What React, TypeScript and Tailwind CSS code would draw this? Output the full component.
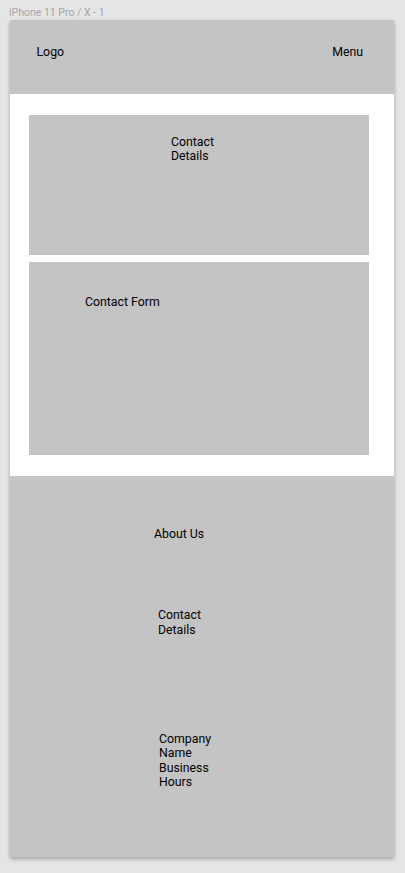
export default function App() {
  return (
    <div className="min-h-[873px] w-[405px] bg-[#e5e5e5] pt-[5px] font-['Roboto',sans-serif] text-black">
      <div className="ml-[9px] h-[15px] text-[10.5px] leading-[15px] text-[#a6a6a6]">iPhone 11 Pro / X - 1</div>
      <div className="ml-[9.5px] w-[384.5px] shadow-[0_2px_4px_rgba(0,0,0,0.3)]">
        <header className="flex h-[74px] items-start justify-between bg-[#c4c4c4] pl-[27px] pr-[31px] pt-[25px] text-[12.3px] leading-[14.5px]">
          <span>Logo</span>
          <span>Menu</span>
        </header>
        <main className="flex flex-col gap-[7px] bg-white pb-[21px] pl-[19.5px] pt-[21px]">
          <section className="h-[140px] w-[340px] bg-[#c4c4c4] pl-[142px] pt-[19.5px]">
            <p className="w-[60px] text-[12.3px] leading-[14.3px]">Contact Details</p>
          </section>
          <section className="h-[193px] w-[340px] bg-[#c4c4c4] pl-[56px] pt-[33px]">
            <p className="text-[12.3px] leading-[14.5px]">Contact Form</p>
          </section>
        </main>
        <footer className="flex h-[381px] flex-col bg-[#c4c4c4] pt-[51px] text-[12.3px] leading-[14.4px]">
          <p className="pl-[144.5px]">About Us</p>
          <p className="mt-[67px] w-[210px] pl-[148.5px]">Contact Details</p>
          <p className="mt-[94.5px] w-[210px] pl-[149.5px]">Company Name Business Hours</p>
        </footer>
      </div>
    </div>
  );
}
